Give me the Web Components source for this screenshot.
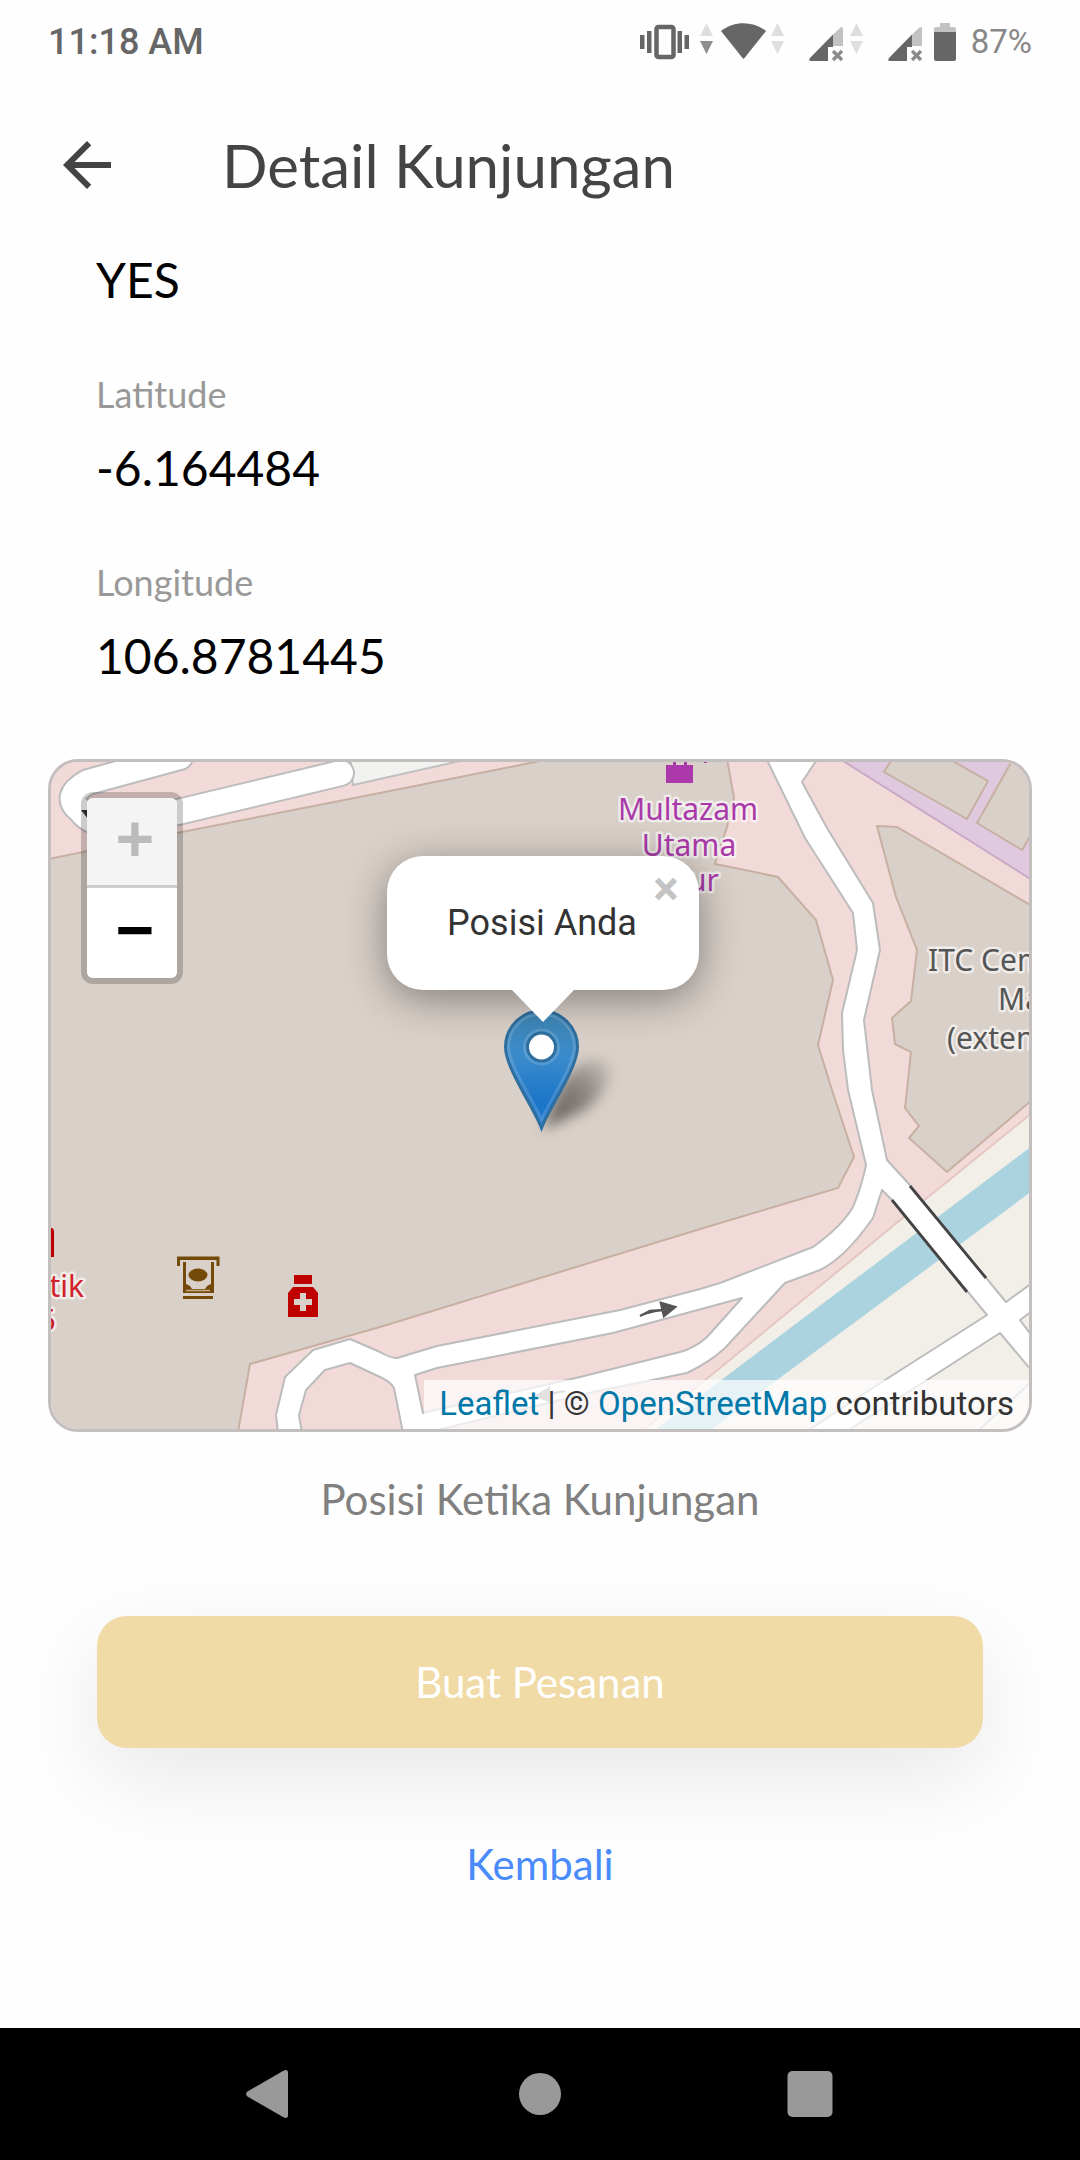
<!DOCTYPE html>
<html lang="id">
<head>
<meta charset="utf-8">
<meta name="viewport" content="width=device-width, initial-scale=1">
<title>Detail Kunjungan</title>
<style>
  html, body { margin: 0; }
  body { background: #fefefe; font-family: Lato, "Open Sans", sans-serif; color: #000; }
</style>
</head>
<body>
<visit-page>
  <status-bar slot="status" time="11:18 AM" battery="87%"></status-bar>
  <app-header slot="header">Detail Kunjungan</app-header>
  <detail-field>YES</detail-field>
  <detail-field label="Latitude">-6.164484</detail-field>
  <detail-field label="Longitude">106.8781445</detail-field>
  <visit-map slot="map">
    <map-popup slot="popup">Posisi Anda</map-popup>
    <zoom-control slot="controls"></zoom-control>
    <map-attribution slot="attribution"></map-attribution>
  </visit-map>
  <span slot="caption">Posisi Ketika Kunjungan</span>
  <action-button slot="actions">Buat Pesanan</action-button>
  <action-button slot="actions" plain>Kembali</action-button>
  <nav-bar slot="nav"></nav-bar>
</visit-page>

<script>
const define = (name, render) => customElements.define(name, class extends HTMLElement {
  constructor() {
    super();
    this.attachShadow({ mode: 'open' });
  }
  connectedCallback() {
    this.shadowRoot.innerHTML = render(this);
  }
});

define('visit-page', () => `
  <style>
    :host { display: flex; flex-direction: column; min-height: 100vh; }
    .fields { display: flex; flex-direction: column; gap: 62px; padding: 0 96px; }
    .map { padding: 73px 48px 0; }
    .caption { padding: 42px 48px 0; text-align: center; font-size: 42px; line-height: 50px; color: #808080; }
    .actions { display: flex; flex-direction: column; gap: 91px; padding: 92px 97px; }
    .nav { margin-top: auto; }
  </style>
  <slot name="status"></slot>
  <slot name="header"></slot>
  <main>
    <div class="fields"><slot></slot></div>
    <div class="map"><slot name="map"></slot></div>
    <div class="caption"><slot name="caption"></slot></div>
    <div class="actions"><slot name="actions"></slot></div>
  </main>
  <div class="nav"><slot name="nav"></slot></div>`);

define('status-bar', el => `
  <style>
    :host { display: flex; align-items: center; height: 84px; padding: 0 48px; font-family: Roboto, sans-serif; }
    .time { font-size: 36px; line-height: 44px; font-weight: 500; color: #666; margin-right: auto; }
    svg { display: block; width: 318px; height: 44px; }
    .battery { font-size: 33px; line-height: 44px; color: #888; margin-left: 13px; }
  </style>
  <span class="time">${el.getAttribute('time')}</span>
  <svg viewBox="640 18 318 44" aria-hidden="true">
    <g fill="#666">
      <rect x="656.5" y="25" width="17" height="30" rx="2" fill="none" stroke="#666" stroke-width="4.5"/>
      <path d="M640 33h4.500v14h-4.500zM647 29h4.500v22h-4.500zM677.500 29h4.500v22h-4.500zM684.500 33h4.500v14h-4.500z"/>
      <path d="M721 29C734 18.500 753 18.500 766 29L744.500 56Q743.500 57.500 742.500 56Z"/>
      <path d="M833 32.500V45h-5v14H811Q808 59 810 56Z"/>
      <path d="M912 32.500V45h-5v14H890Q887 59 889 56Z"/>
      <path d="M934 30h22v27q0 2-2 2h-18q-2 0-2-2z"/>
    </g>
    <g fill="#c2c2c2">
      <path d="M833 32.500L840.500 25.500Q843 24 843 27V44H833Z"/>
      <path d="M912 32.500L919.500 25.500Q922 24 922 27V44H912Z"/>
      <path d="M934 30v-3q0-2 2-2h4v-4h10v4h4q2 0 2 2v3z"/>
    </g>
    <path d="M833 49l9 9m0-9l-9 9M912 49l9 9m0-9l-9 9" stroke="#8a8a8a" stroke-width="3.200" fill="none"/>
    <g fill="#dedede">
      <path d="M700 34h13l-6.500-13zM771 34h13l-6.500-13zM771 39h13l-6.500 13zM850 34h13l-6.500-13zM850 39h13l-6.500 13z"/>
      <path d="M700 39h13l-6.500 13z" fill="#8e8e8e"/>
    </g>
  </svg>
  <span class="battery">${el.getAttribute('battery')}</span>`);

define('app-header', () => `
  <style>
    :host { display: flex; align-items: center; height: 162px; padding: 0 48px 4px 51px; gap: 99px; }
    button { display: block; border: 0; background: none; padding: 0; width: 72px; height: 72px; }
    svg { display: block; width: 72px; height: 72px; }
    h1 { margin: 0; font-size: 60px; line-height: 72px; font-weight: 400; color: #444; }
  </style>
  <button type="button" aria-label="Kembali">
    <svg viewBox="0 0 24 24" fill="#444"><path d="M20 11H7.830l5.590-5.590L12 4l-8 8 8 8 1.410-1.410L7.830 13H20v-2z"/></svg>
  </button>
  <h1><slot></slot></h1>`);

define('detail-field', el => `
  <style>
    :host { display: flex; flex-direction: column; gap: 22px; }
    .label { font-size: 36px; line-height: 44px; color: #999; }
    .value { font-size: 48px; line-height: 60px; color: #000; }
  </style>
  ${el.hasAttribute('label') ? `<span class="label">${el.getAttribute('label')}</span>` : ''}
  <span class="value"><slot></slot></span>`);

define('visit-map', () => `
  <style>
    :host { display: block; position: relative; height: 667px; border: 3px solid #c3bfbf; border-radius: 30px; overflow: hidden; background: #f2dad9; }
    .tiles { display: block; width: 100%; height: 100%; }
    .popup { position: absolute; left: 50%; bottom: 407px; transform: translateX(-50%); margin-left: 3px; }
    .controls { position: absolute; left: 30px; top: 30px; }
    .attribution { position: absolute; right: 0; bottom: 0; }
    text { font-family: "Noto Sans", "Open Sans", sans-serif; font-size: 30px; paint-order: stroke; stroke-linejoin: round; stroke-width: 5px; stroke: rgba(255,255,255,.6); }
  </style>
  <svg class="tiles" viewBox="51 762 978 667" preserveAspectRatio="xMidYMid slice" role="img" aria-label="Peta">
    <defs>
      <linearGradient id="pin" x1="0" y1="0" x2="0" y2="1">
        <stop offset="0" stop-color="#3f86b4"/><stop offset=".4" stop-color="#3a8bcb"/><stop offset=".8" stop-color="#1a74c8"/><stop offset="1" stop-color="#2a7dcb"/>
      </linearGradient>
      <linearGradient id="cast" x1="0" y1="1" x2="1" y2="0">
        <stop offset="0" stop-color="#000" stop-opacity=".6"/><stop offset=".6" stop-color="#000" stop-opacity=".35"/><stop offset="1" stop-color="#000" stop-opacity=".05"/>
      </linearGradient>
      <filter id="soft" x="-50%" y="-50%" width="200%" height="200%"><feGaussianBlur stdDeviation="7"/></filter>
    </defs>
    <rect x="51" y="762" width="978" height="667" fill="#f2dad9"/>
    <!-- open land and canal -->
    <path d="M1032 1113L927 1198L720 1368L636 1436H1032Z" fill="#f2efe9" stroke="#e6c6c4" stroke-width="2"/>
    <path d="M1032 1146L720 1381L650 1434H706L777 1380L1032 1191Z" fill="#aad3df"/>
    <!-- purple block -->
    <path d="M840 759L1032 880V759Z" fill="#e0c9de" stroke="#c9a9c6" stroke-width="2"/>
    <g fill="#d9d0c9" stroke="#c7b0a2" stroke-width="2">
      <path d="M892 759L884 772L967 819L988 781L949 759Z"/>
      <path d="M1013 759L977 823L1022 850L1032 833V759Z"/>
      <path d="M48 859L182 832L390 791L550 759H727L734 798L727 827L715 864L740 869L778 877L816 920L833 980L818 1045L832 1090L854 1157L838 1188L720 1223L380 1327L250 1364L238 1432H48Z"/>
      <path d="M877 826L897 827L1032 906V1100L947 1172L909 1138L919 1126L905 1108L907 1090L911 1052L895 1044L892 1018L911 1001L917 950L896 897Z"/>
    </g>
    <!-- north-west road loop -->
    <path d="M353 785L460 761V755H350Z" fill="#f2f2f1" stroke="#c0c0c0" stroke-width="2"/>
    <g fill="none" stroke-linejoin="round" stroke-linecap="round">
      <path d="M180 757L88 782Q62 796 80 810Q90 824 112 824L178 812L341 773" stroke="#bdbdbd" stroke-width="28"/>
      <path d="M180 757L88 782Q62 796 80 810Q90 824 112 824L178 812L341 773" stroke="#fff" stroke-width="24"/>
    </g>
    <path d="M81 810h7v9z" fill="#333"/>
    <!-- main roads -->
    <g fill="#fff" stroke="#bcbcbc" stroke-width="2" stroke-linejoin="round">
      <path d="M766 758L805 838L853 913L857 950L842 1013L843 1050L848 1090L866 1165Q862 1185 853 1207Q842 1226 813 1247L720 1283L700 1289L620 1310L437 1346L397 1358Q390 1358 380 1352L350 1339L313 1350L285 1377L276 1415L278 1433H302L299 1415L306 1390L325 1370L350 1363L380 1377Q391 1382 394 1388L403 1433H425L593 1392L687 1373Q710 1362 725 1348L785 1283L820 1270Q845 1258 873 1218L882 1190L892 1200L987 1315L885 1380L804 1433H844L927 1380L1000 1333L1032 1371V1336L1020 1320L1032 1311V1283L1006 1302L908 1183L887 1160L872 1090L864 1020L880 950L873 903L827 828L802 782L818 758Z"/>
      <path d="M415 1375L437 1368L613 1333L742 1298L707 1337Q695 1348 680 1352L580 1377L423 1413Z" fill="#f2dad9"/>
      <path d="M1030 1383L978 1431" fill="none"/>
    </g>
    <path d="M910 1186L986 1278M892 1200L967 1292" stroke="#444" stroke-width="2.800" fill="none"/>
    <path d="M640 1316L650 1311L664 1310M661 1303L675 1307L664 1316Z" stroke="#555" stroke-width="2.500" fill="#555"/>
    <path d="M565 1391L545 1395M549 1388L536 1396L549 1401Z" stroke="#999" stroke-width="2" fill="#999"/>
    <!-- points of interest -->
    <path d="M666 765h27v18h-27zM673 760h3v6h-3zM684 760h3v6h-3zM704 760h3v3h-3z" fill="#ac39ac"/>
    <g fill="#a939a9">
      <text x="688" y="820" text-anchor="middle">Multazam</text>
      <text x="689" y="856" text-anchor="middle">Utama</text>
      <text x="719" y="891" text-anchor="end">ur</text>
    </g>
    <g fill="#555">
      <text x="928" y="971">ITC Cem</text>
      <text x="998" y="1010">Ma</text>
      <text x="947" y="1049">(exten</text>
    </g>
    <g fill="#d0212a">
      <text x="84" y="1297" text-anchor="end">tik</text>
      <text x="56" y="1331" text-anchor="end">5</text>
    </g>
    <path d="M48 1228h4q2 1 2 3v26h-6z" fill="#bf0000"/>
    <g fill="#734a08">
      <path d="M177 1256.500h42.500V1266h-3v-6h-36.500v6h-3zM183 1262h3v22q4 1 6 5h13q2-4 6-5v-22h3v31h-31zM183 1296h30v3h-30z"/>
      <ellipse cx="198" cy="1275" rx="9.500" ry="6.500"/>
      <path d="M186 1290.500h24" stroke="#c4ad8e" stroke-width="1.500"/>
    </g>
    <path d="M294 1275h18v9h-18zM293 1287h20l5 6v24h-30v-24zM300 1293v6h-6v6h6v6h6v-6h6v-6h-6v-6z" fill="#bf0000" fill-rule="evenodd"/>
    <!-- position marker -->
    <path d="M543 1129L560 1085Q585 1050 608 1062Q615 1085 585 1110Z" fill="url(#cast)" filter="url(#soft)"/>
    <path d="M541.500 1128C534 1108 505.500 1068 505.500 1047A36 36 0 0 1 577.500 1047C577.500 1068 549 1108 541.500 1128Z" fill="url(#pin)" stroke="#2e6f9f" stroke-width="3"/>
    <path d="M541.500 1120C534 1101 508.500 1066 508.500 1047A33 33 0 0 1 574.500 1047C574.500 1066 549 1101 541.500 1120Z" fill="none" stroke="#fff" stroke-opacity=".15" stroke-width="3"/>
    <circle cx="541.500" cy="1047" r="17" fill="none" stroke="#fff" stroke-opacity=".15" stroke-width="3"/>
    <circle cx="541.500" cy="1047" r="14" fill="#fff" stroke="#2e6f9f" stroke-width="3"/>
  </svg>
  <div class="popup"><slot name="popup"></slot></div>
  <div class="controls"><slot name="controls"></slot></div>
  <div class="attribution"><slot name="attribution"></slot></div>`);

define('map-popup', () => `
  <style>
    :host { display: block; position: relative; padding-bottom: 32px; font-family: Roboto, sans-serif; }
    .card { box-sizing: border-box; display: grid; place-items: center; min-width: 312px; height: 134px; padding-right: 2px; border-radius: 36px; background: #fff; box-shadow: 0 9px 42px rgba(0,0,0,.4); font-size: 36px; line-height: 50px; color: #333; }
    .tip { position: absolute; left: 50%; bottom: 0; width: 64px; height: 33px; margin-left: -32px; background: #fff; clip-path: polygon(0 0, 100% 0, 50% 100%); }
    button { position: absolute; right: 12px; top: 12px; width: 42px; height: 42px; padding: 0; border: 0; background: none; font: 700 48px/42px Roboto, sans-serif; color: #c3c3c3; }
  </style>
  <div class="card"><slot></slot></div>
  <div class="tip"></div>
  <button type="button" aria-label="Tutup">×</button>`);

define('zoom-control', () => `
  <style>
    :host { display: flex; flex-direction: column; border: 6px solid rgba(0,0,0,.2); border-radius: 12px; }
    button { box-sizing: border-box; display: block; width: 90px; height: 90px; padding: 0 0 8px 6px; border: 0; background: #fff; color: #000; font: 700 62px/72px "DejaVu Sans Mono", monospace; }
    button:first-of-type { border-bottom: 3px solid #ccc; border-radius: 6px 6px 0 0; background: #f4f4f4; color: #bbb; }
    button:last-of-type { border-radius: 0 0 6px 6px; }
  </style>
  <button type="button" aria-label="Perbesar">+</button>
  <button type="button" aria-label="Perkecil">−</button>`);

define('map-attribution', () => `
  <style>
    :host { display: block; padding: 0 15px 2px; background: rgba(255,255,255,.7); font: 33px/47px Roboto, sans-serif; color: #333; white-space: nowrap; }
    a { color: #0078a8; text-decoration: none; }
  </style>
  <a href="#leaflet">Leaflet</a> | © <a href="#osm">OpenStreetMap</a> contributors`);

define('action-button', el => `
  <style>
    :host { display: block; }
    button { display: block; width: 100%; height: 132px; padding: 0; border: 0; border-radius: 30px; background: #f0dba6; color: #fff; font: 42px/50px Lato, sans-serif; box-shadow: 0 30px 90px rgba(0,0,0,.09); }
    :host([plain]) button { width: auto; height: auto; margin: 0 auto; background: none; box-shadow: none; color: #4a8bfc; }
  </style>
  <button type="button"><slot></slot></button>`);

define('nav-bar', () => `
  <style>
    :host { display: block; background: #000; }
    nav { display: flex; height: 132px; padding: 0 12.500%; }
    button { flex: 1; display: grid; place-items: center; padding: 0; border: 0; background: none; }
    svg { display: block; width: 54px; height: 54px; fill: #999; }
  </style>
  <nav>
    <button type="button" aria-label="Kembali"><svg viewBox="0 0 54 54"><path d="M4.500 24.500L40 4Q45 1.500 45 6V48Q45 52.500 40 50L4.500 29.500Q1.500 27 4.500 24.500Z"/></svg></button>
    <button type="button" aria-label="Beranda"><svg viewBox="0 0 54 54"><circle cx="27" cy="27" r="21"/></svg></button>
    <button type="button" aria-label="Aplikasi terbaru"><svg viewBox="0 0 54 54"><rect x="4.500" y="4" width="45" height="46" rx="5"/></svg></button>
  </nav>`);
</script>
</body>
</html>
